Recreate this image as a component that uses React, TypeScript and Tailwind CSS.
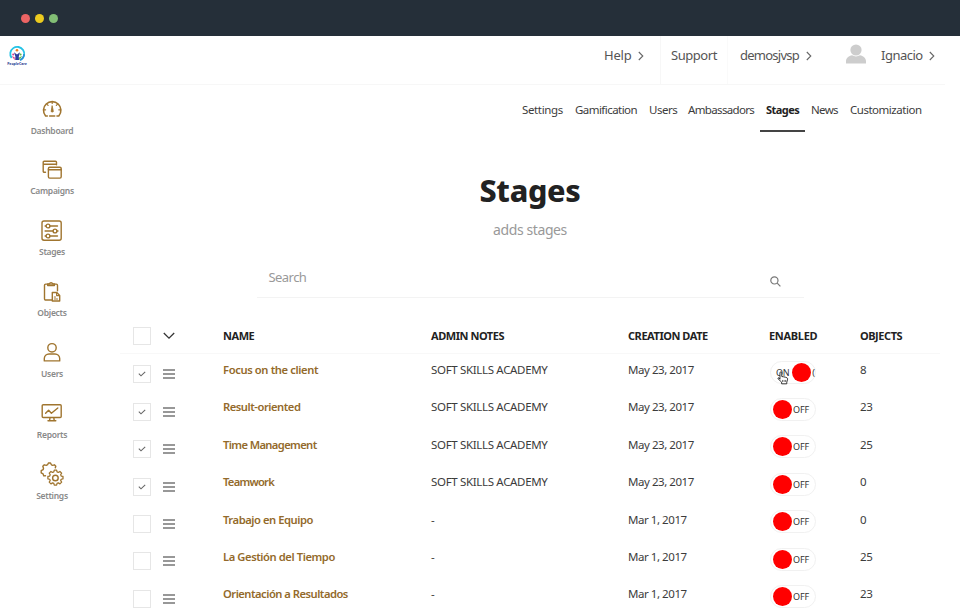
import type { ReactNode } from 'react'
import clsx from 'clsx'

type Stage = {
  name: string
  notes: string
  date: string
  enabled: boolean
  checked: boolean
  objects: number
  tracking: string
}

const stages: Stage[] = [
  { name: 'Focus on the client', notes: 'SOFT SKILLS ACADEMY', date: 'May 23, 2017', enabled: true, checked: true, objects: 8, tracking: 'tracking-[-0.38px]' },
  { name: 'Result-oriented', notes: 'SOFT SKILLS ACADEMY', date: 'May 23, 2017', enabled: false, checked: true, objects: 23, tracking: 'tracking-[-0.46px]' },
  { name: 'Time Management', notes: 'SOFT SKILLS ACADEMY', date: 'May 23, 2017', enabled: false, checked: true, objects: 25, tracking: 'tracking-[-0.62px]' },
  { name: 'Teamwork', notes: 'SOFT SKILLS ACADEMY', date: 'May 23, 2017', enabled: false, checked: true, objects: 0, tracking: 'tracking-[-0.75px]' },
  { name: 'Trabajo en Equipo', notes: '-', date: 'Mar 1, 2017', enabled: false, checked: false, objects: 0, tracking: 'tracking-[-0.45px]' },
  { name: 'La Gestión del Tiempo', notes: '-', date: 'Mar 1, 2017', enabled: false, checked: false, objects: 25, tracking: 'tracking-[-0.42px]' },
  { name: 'Orientación a Resultados', notes: '-', date: 'Mar 1, 2017', enabled: false, checked: false, objects: 23, tracking: 'tracking-[-0.5px]' },
]

const tabs = [
  { label: 'Settings', style: 'w-[41px] tracking-[-0.36px]' },
  { label: 'Gamification', style: 'w-[62px] ml-3 tracking-[-0.55px]' },
  { label: 'Users', style: 'w-[28px] ml-3 tracking-[-0.5px]' },
  { label: 'Ambassadors', style: 'w-[66px] ml-[11px] tracking-[-0.65px]' },
  { label: 'Stages', style: 'w-[34px] ml-3 tracking-[-0.55px]' },
  { label: 'News', style: 'w-[27px] ml-[11px] tracking-[-0.65px]' },
  { label: 'Customization', style: 'w-[72px] ml-3 tracking-[-0.48px]' },
]

function Icon({ children }: { children: ReactNode }) {
  return (
    <svg width="26" height="26" viewBox="0 0 26 26" fill="none" stroke="#a0752f" strokeWidth="1.4" strokeLinecap="round" strokeLinejoin="round">
      {children}
    </svg>
  )
}

const menu = [
  {
    label: 'Dashboard',
    icon: (
      <Icon>
        <path d="M8.3 20H6.6A8.7 8.7 0 1 1 19.8 20H18M10.7 20h5" strokeWidth="1.6" />
        <path d="M13.2 10l1 4.5a1.1 1.1 0 1 1-2 0z" fill="#a0752f" strokeWidth="0.8" />
        <path d="M13.2 5.8v1.6M8 8.3l1.1 1.1M18.4 8.3l-1.1 1.1M5 13.8h1.6M19.8 13.8h1.6" strokeWidth="1.2" />
      </Icon>
    ),
  },
  {
    label: 'Campaigns',
    icon: (
      <Icon>
        <path d="M6.5 15.3H5.2a1 1 0 0 1-1-1V5.3a1 1 0 0 1 1-1h11.3a1 1 0 0 1 1 1v2.5M4.2 7.2h13" />
        <rect x="9.4" y="10.3" width="12.8" height="10.8" rx="1.3" />
        <path d="M9.4 12.8h12.8" />
      </Icon>
    ),
  },
  {
    label: 'Stages',
    icon: (
      <Icon>
        <rect x="3" y="3" width="19.2" height="19.2" rx="2" />
        <circle cx="9" cy="8" r="1.9" />
        <path d="M6.1 8H7M11 8h7.5" />
        <circle cx="16" cy="13" r="1.9" />
        <path d="M6.1 13h7.8M18 13h1" />
        <circle cx="9" cy="18" r="1.9" />
        <path d="M6.1 18H7M11 18h7.5" />
      </Icon>
    ),
  },
  {
    label: 'Objects',
    icon: (
      <Icon>
        <path d="M13 21H6.7a1.2 1.2 0 0 1-1.2-1.2V6.3a1.2 1.2 0 0 1 1.2-1.2h10.6a1.2 1.2 0 0 1 1.2 1.2v5.5" />
        <path d="M8.700 6.600V4.900h1.700a1.700 1.700 0 0 1 3.300 0h1.700v1.700z" />
        <path d="M13.3 13.5h4.5l2.9 2.9v5.6h-7.4z" />
        <path d="M17.6 13.7v2.9h2.9M15.3 18h1.2M15.3 20h3.3" strokeWidth="1.1" />
      </Icon>
    ),
  },
  {
    label: 'Users',
    icon: (
      <Icon>
        <circle cx="13" cy="7.8" r="4.2" />
        <path d="M5.3 20.900v-2.300a4.700 4.700 0 0 1 4.700-4.600h6a4.700 4.700 0 0 1 4.700 4.600v2.300z" />
      </Icon>
    ),
  },
  {
    label: 'Reports',
    icon: (
      <Icon>
        <rect x="3.2" y="4.7" width="19" height="12.8" rx="1" />
        <path d="M6.6 13.3l3-3 2.8 3L18.8 8" />
        <path d="M11 17.7l-.4 2.6M14.8 17.7l.4 2.6M9 20.7h7.8" />
      </Icon>
    ),
  },
  {
    label: 'Settings',
    icon: (
      <Icon>
        <path d="M6.2 14.3l-1.8.1-.6-2-1.9-1V9.2l1.9-1 .4-1.500-.7-1.900 1.500-1.500 2 .6 1.300-.7.8-1.700h2.100l.9 1.800 1.300.5 1.700-.5 1.400 1.400-.5 1.600" transform="translate(.3 .5)" />
        <path d="M15.300 9.200h2.600l.5 2 1.400.6 1.800-1.100 1.900 1.900-1.100 1.800.6 1.400 2 .5v2.600l-2 .5-.6 1.400 1.100 1.800-1.900 1.900-1.800-1.100-1.400.6-.5 2h-2.600l-.5-2-1.400-.6-1.800 1.100-1.900-1.900 1.100-1.800-.6-1.400-2-.5v-2.600l2-.5.600-1.400-1.100-1.800 1.900-1.900 1.800 1.100 1.400-.6z" transform="translate(1.500 .8) scale(.9)" />
        <circle cx="16.4" cy="17" r="2.8" />
      </Icon>
    ),
  },
]

function Chevron() {
  return (
    <svg width="6" height="10" viewBox="0 0 6 10" fill="none" stroke="#666" strokeWidth="1.1">
      <path d="M.8 1l4 4-4 4" />
    </svg>
  )
}

function Logo() {
  return (
    <div className="flex flex-col items-center w-[22px]">
      <svg width="18" height="18" viewBox="0 0 18 18" fill="none">
        <path d="M3.6 13A7 7 0 1 1 13 14.8" stroke="#25c3e6" strokeWidth="1.8" />
        <path d="M12 15.3A7 7 0 0 0 16 9" stroke="#2c8fd8" strokeWidth="1.6" />
        <circle cx="9" cy="5.2" r="1.3" fill="#ef7d22" />
        <path d="M6 7.2l3 2.3 3-2.3-1.2 4.3.2 3.5H7.2l.2-3.5z" fill="#2d3e9e" />
        <circle cx="5.2" cy="9.5" r="1" fill="#d13b8b" />
        <path d="M3.7 11l3 1.2v3z" fill="#e0448f" />
        <circle cx="12.6" cy="9.5" r="1" fill="#56b947" />
        <path d="M14.2 11l-3 1.2v3z" fill="#56b947" />
      </svg>
      <span className="-mt-px text-[3.5px] leading-[3px] font-bold text-[#263a94]">PeopleCare</span>
    </div>
  )
}

function Toggle({ on }: { on: boolean }) {
  return (
    <div className="flex items-center w-[46px] h-[23px] rounded-full border border-[#f1f1f1] text-[9px] leading-[21px] text-[#333]">
      {on ? (
        <>
          <span className="w-[15px] ml-[5px] tracking-[-0.3px]">ON</span>
          <span className="w-[19px] h-[19px] ml-[3px] rounded-full bg-[#ff0000] shrink-0" />
          <span className="ml-px">(</span>
        </>
      ) : (
        <>
          <span className="w-[19px] h-[19px] ml-[2px] rounded-full bg-[#ff0000] shrink-0" />
          <span className="ml-px tracking-[-0.1px]">OFF</span>
        </>
      )}
    </div>
  )
}

function HandCursor() {
  return (
    <svg className="absolute left-[8px] top-[12px]" width="12" height="14" viewBox="0 0 13 15" fill="#fff" stroke="#222" strokeWidth="1" strokeLinejoin="round">
      <path d="M3.2 8.8V1.9a1 1 0 0 1 2 0v4l1.9.3 1.9.4 1.8.7c.7.3.8.8.7 1.5l-.9 3.2v1.8H5V12L1.2 8.4c-.6-.9.3-1.5 1.1-.9z" />
      <path d="M6 9.6v2.2M7.7 9.6v2.2M9.3 9.6v2.2" strokeWidth=".7" />
    </svg>
  )
}

function Checkbox({ checked }: { checked: boolean }) {
  return (
    <div className="w-[18px] h-[18px] border border-[#e6e6e6] flex items-center justify-center">
      {checked && (
        <svg width="8" height="6" viewBox="0 0 8 6" fill="none" stroke="#666" strokeWidth="1.1">
          <path d="M.8 2.7L3 4.8 7.2.8" />
        </svg>
      )}
    </div>
  )
}

const columns = 'grid grid-cols-[30px_60px_208px_197px_141px_91px_1fr] pl-[13px]'

export default function App() {
  return (
    <div className="w-[960px] h-[608px] overflow-hidden bg-white text-[#3c3c3c] font-['Noto_Sans','Open_Sans',sans-serif]">
      <div className="h-9 bg-[#252f39] flex items-center gap-[5px] pl-[21px]">
        <span className="w-[9px] h-[9px] rounded-full bg-[#ec6464]" />
        <span className="w-[9px] h-[9px] rounded-full bg-[#eccb1f]" />
        <span className="w-[9px] h-[9px] rounded-full bg-[#82be75]" />
      </div>

      <header className="h-[49px] w-[945px] border-b border-[#f7f7f7] flex justify-between text-[13px] text-[#555]">
        <div className="pl-[6px] pt-[9px]">
          <Logo />
        </div>
        <nav className="flex h-full leading-[38px]">
          <div className="w-[56px] flex">
            <span className="w-[34px] tracking-[-0.2px]">Help</span>
            <span className="pt-[15px]"><Chevron /></span>
          </div>
          <div className="w-[67px] border-l border-[#f7f7f7] pl-[10px] tracking-[-0.45px]">Support</div>
          <div className="w-[119px] border-l border-[#fafafa] pl-3 flex">
            <span className="w-[66px] tracking-[-0.75px]">demosjvsp</span>
            <span className="pt-[15px]"><Chevron /></span>
          </div>
          <div className="w-[99px] flex">
            <svg className="mt-[8px] mr-[15px]" width="20" height="20" viewBox="0 0 20 20" fill="#cdcdcd">
              <circle cx="10" cy="6" r="5.6" />
              <path d="M0 19.5v-2.2C0 14 3 12 6 11.3c2.4 1.5 5.6 1.5 8 0 3 .7 6 2.7 6 6v2.2z" />
            </svg>
            <span className="w-[48px] tracking-[-0.5px]">Ignacio</span>
            <span className="pt-[15px]"><Chevron /></span>
          </div>
        </nav>
      </header>

      <div className="flex">
        <aside className="w-[104px] pt-[11px] flex flex-col">
          {menu.map((item) => (
            <div key={item.label} className="h-[60.9px] flex flex-col items-center">
              {item.icon}
              <span className="mt-[1.5px] text-[8.5px] leading-[14px] font-semibold text-[#8a8a8a] tracking-[-0.28px]">{item.label}</span>
            </div>
          ))}
        </aside>

        <main className="w-[856px] pl-4">
          <div className="flex justify-end pr-[38px] h-[47px] text-[11.5px] leading-[49px] whitespace-nowrap">
            {tabs.map((tab) => (
              <div
                key={tab.label}
                className={clsx('relative', tab.style, tab.label === 'Stages' && 'text-[11px] leading-[49px] font-bold text-[#222]')}
              >
                {tab.label}
                {tab.label === 'Stages' && <span className="absolute -left-[6px] top-[45px] w-[45px] h-[2px] bg-[#444]" />}
              </div>
            ))}
          </div>

          <div className="w-[820px] flex flex-col items-center">
            <h1 className="mt-[37px] text-[30.5px] leading-[42px] font-extrabold text-[#222] tracking-[-0.3px]">Stages</h1>
            <p className="mt-[9px] text-[14px] leading-5 text-[#999] tracking-[-0.4px]">adds stages</p>
            <div className="mt-[18px] w-[547px] h-[40px] border-b border-[#f3f3f3] flex justify-between pl-[12px] pr-[23px]">
              <span className="text-[13px] leading-[39px] text-[#999] tracking-[-0.55px]">Search</span>
              <svg className="mt-[18px]" width="11" height="11" viewBox="0 0 11 11" fill="none" stroke="#777" strokeWidth="1.2">
                <circle cx="4.4" cy="4.4" r="3.6" />
                <path d="M7.2 7.2l3.2 3.2" />
              </svg>
            </div>
          </div>

          <div className="w-[820px]">
            <div className={clsx(columns, 'h-[56px] pt-[25px] border-b border-[#f8f8f8] text-[11px] leading-[25px] font-bold text-[#222] whitespace-nowrap tracking-[-0.45px]')}>
              <div className="pt-[4px]"><Checkbox checked={false} /></div>
              <svg className="mt-[9px]" width="12" height="8" viewBox="0 0 12 8" fill="none" stroke="#333" strokeWidth="1.3">
                <path d="M.8 1l5.2 5.2L11.2 1" />
              </svg>
              <span>NAME</span>
              <span>ADMIN NOTES</span>
              <span>CREATION DATE</span>
              <span className="tracking-[-0.3px]">ENABLED</span>
              <span>OBJECTS</span>
            </div>

            {stages.map((stage) => (
              <div key={stage.name} className={clsx(columns, 'h-[37.4px] pt-[5px] text-[11.5px] leading-[22px] whitespace-nowrap')}>
                <div className="pt-[6.4px]"><Checkbox checked={stage.checked} /></div>
                <svg className="mt-[10.4px]" width="12" height="10" viewBox="0 0 12 10" stroke="#333" strokeWidth="1.2">
                  <path d="M0 1h12M0 5h12M0 9h12" />
                </svg>
                <span className={clsx('text-[11.2px] leading-[22px] font-semibold text-[#936a2b]', stage.tracking)}>{stage.name}</span>
                <span className="tracking-[-0.33px]">{stage.notes}</span>
                <span className="tracking-[-0.45px]">{stage.date}</span>
                <div className="relative pt-[1.6px] pl-[1px]">
                  <Toggle on={stage.enabled} />
                  {stage.enabled && <HandCursor />}
                </div>
                <span className="tracking-[-0.4px]">{stage.objects}</span>
              </div>
            ))}
          </div>
        </main>
      </div>
    </div>
  )
}
